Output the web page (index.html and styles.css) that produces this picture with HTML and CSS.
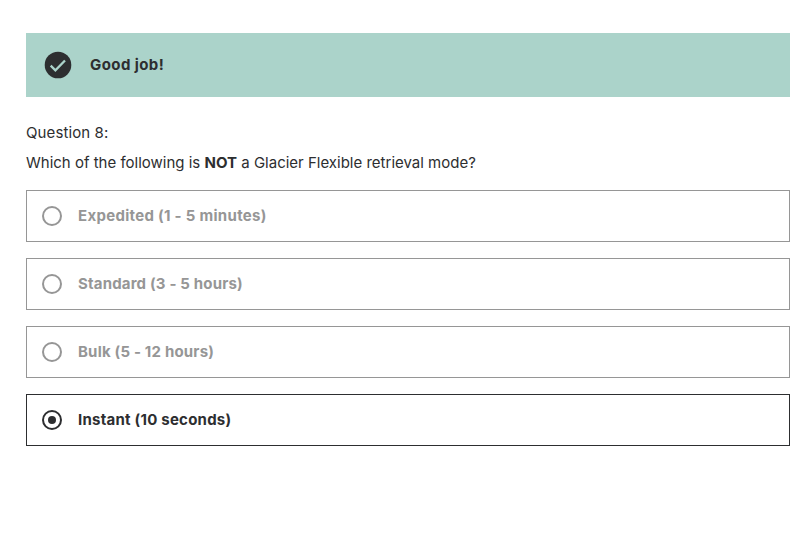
FILE: index.html
```html
<!DOCTYPE html>
<html lang="en">
<head>
<meta charset="utf-8">
<title>Quiz</title>
<link rel="stylesheet" href="styles.css">
</head>
<body>
<main class="quiz">
  <div class="banner">
    <svg class="check" viewBox="0 0 28 28" aria-hidden="true"><circle cx="14" cy="14" r="13.3"/><path d="M6.7 14.6l4.7 4.7 9.6-9.8"/></svg>
    <strong class="praise">Good job!</strong>
  </div>
  <p class="number">Question 8:</p>
  <p class="question">Which of the following is <b>NOT</b> a Glacier Flexible retrieval mode?</p>
  <div class="options">
    <label class="option"><span class="radio"></span><span class="expedited">Expedited (1 - 5 minutes)</span></label>
    <label class="option"><span class="radio"></span><span class="standard">Standard (3 - 5 hours)</span></label>
    <label class="option"><span class="radio"></span><span class="bulk">Bulk (5 - 12 hours)</span></label>
    <label class="option selected"><span class="radio"></span><span class="instant">Instant (10 seconds)</span></label>
  </div>
</main>
</body>
</html>
```
FILE: styles.css
```css
* { box-sizing: border-box; }
body { margin: 0; background: #fff; color: #2d2e30; font: 15px/24px Inter, "Liberation Sans", Arial, sans-serif; }
.quiz { padding: 33px 16px 0 26px; }
.banner { display: flex; align-items: center; height: 64px; padding-left: 18px; gap: 18px; background: #abd3ca; }
.check { width: 28px; height: 28px; fill: #2d2e30; }
.check path { fill: none; stroke: #abd3ca; stroke-width: 2.3; }
.praise { letter-spacing: .42px; }
p { margin: 0; }
.number { margin-top: 24px; letter-spacing: .1px; }
.question { margin-top: 6px; }
.options { display: grid; gap: 16px; margin-top: 15px; }
.option { display: flex; align-items: center; height: 52px; padding-left: 15px; gap: 16px; border: 1px solid #969696; color: #969696; font-weight: 700; }
.radio { display: grid; place-items: center; width: 20px; height: 20px; border: 2px solid currentColor; border-radius: 50%; }
.expedited { letter-spacing: .3px; }
.standard { letter-spacing: .18px; }
.bulk { letter-spacing: .19px; }
.instant { letter-spacing: .24px; }
.selected { color: #2d2e30; border-color: #2d2e30; }
.selected .radio::after { content: ""; width: 8px; height: 8px; border-radius: 50%; background: currentColor; }
```
